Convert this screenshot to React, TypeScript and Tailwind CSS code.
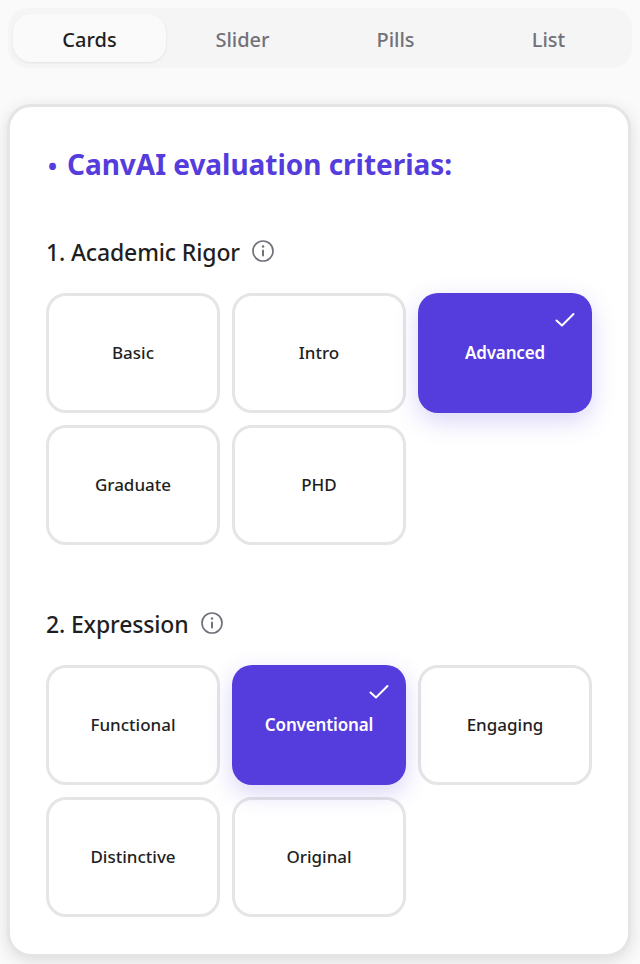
const FONT = "font-['Noto_Sans','Open_Sans',sans-serif]";

function InfoIcon() {
  return (
    <svg className="-translate-y-px" width="24" height="24" viewBox="0 0 24 24" fill="none" stroke="#71717a" strokeWidth="1.7" strokeLinecap="round">
      <circle cx="12" cy="12" r="10" />
      <path d="M12 11.5v5" strokeWidth="2" />
      <path d="M12 7.5h.01" strokeWidth="2.4" />
    </svg>
  );
}

function Check() {
  return (
    <svg className="absolute top-[17px] right-[17px]" width="20" height="20" viewBox="0 0 20 20" fill="none" stroke="#fff" strokeWidth="2" strokeLinecap="round" strokeLinejoin="round">
      <path d="M1.5 10.5 L7 15.5 L18.5 4" />
    </svg>
  );
}

function Option({ label, selected }: { label: string; selected?: boolean }) {
  return selected ? (
    <div className="relative h-[120px] rounded-[20px] bg-[#553cdc] shadow-[0_8px_24px_rgba(85,60,220,0.22)] flex items-center justify-center text-white text-[17px] font-semibold tracking-[-0.15px]">
      {label}
      <Check />
    </div>
  ) : (
    <div className="h-[120px] rounded-[20px] border-[3px] border-[#e5e5e5] bg-white flex items-center justify-center text-[#1f1f23] text-[17px] font-medium">
      {label}
    </div>
  );
}

function Section({ title, options, selected, className }: { title: string; options: string[]; selected: string; className?: string }) {
  return (
    <section className={className}>
      <div className="flex items-center gap-[11px] h-[30px] mb-[26px]">
        <span className="text-[23px] font-medium text-[#1f1f23] tracking-[-0.15px]">{title}</span>
        <InfoIcon />
      </div>
      <div className="grid grid-cols-3 gap-3">
        {options.map((o) => (
          <Option key={o} label={o} selected={o === selected} />
        ))}
      </div>
    </section>
  );
}

export default function App() {
  return (
    <div className={`${FONT} w-[640px] h-[964px] overflow-hidden bg-[#fafafa] p-2`}>
      <div className="h-[60px] rounded-[20px] bg-[#f5f5f5] pl-[5px] pr-[7px] py-[6px] grid grid-cols-4">
        {["Cards", "Slider", "Pills", "List"].map((t, i) => (
          <div
            key={t}
            className={
              i === 0
                ? "rounded-[18px] bg-[#fafafa] shadow-[0_1px_3px_rgba(0,0,0,0.08)] flex items-center justify-center pt-[3px] text-[20px] font-medium text-[#1f1f23]"
                : "flex items-center justify-center pt-[3px] text-[20px] font-medium text-[#71717a]"
            }
          >
            {t}
          </div>
        ))}
      </div>
      <div className="mt-9 -ml-px mr-px h-[853px] rounded-[24px] border-[3px] border-[#e5e5e5] bg-white shadow-[0_4px_16px_rgba(0,0,0,0.12)] px-[36px] pt-[35px]">
        <h1 className="h-[44px] flex items-center text-[28px] font-bold text-[#553cdc] leading-none tracking-[-0.03px]">
          <span className="ml-[2px] mr-[10px] text-[24px] translate-y-[2px]">•</span>
          <span>CanvAI evaluation criterias:</span>
        </h1>
        <Section
          className="mt-[51px]"
          title="1. Academic Rigor"
          options={["Basic", "Intro", "Advanced", "Graduate", "PHD"]}
          selected="Advanced"
        />
        <Section
          className="mt-[64px]"
          title="2. Expression"
          options={["Functional", "Conventional", "Engaging", "Distinctive", "Original"]}
          selected="Conventional"
        />
      </div>
    </div>
  );
}
